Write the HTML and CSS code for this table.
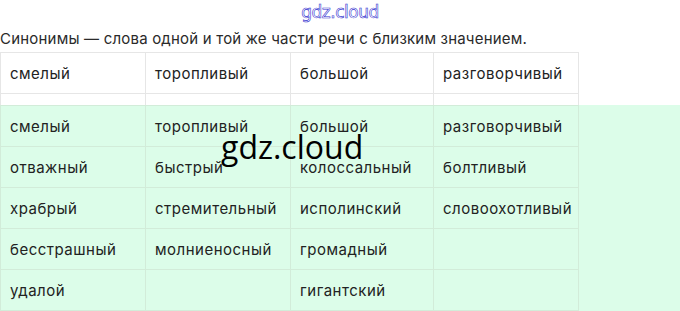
FILE: index.html
```html
<!DOCTYPE html>
<html lang="ru">
<head>
<meta charset="utf-8">
<link rel="stylesheet" href="styles.css">
</head>
<body>
<div class="logo">gdz.cloud</div>
<p class="intro">Синонимы — слова одной и той же части речи с близким значением.</p>
<table class="syn head">
  <colgroup><col class="c1"><col class="c2"><col class="c3"><col class="c4"></colgroup>
  <tr class="row"><td>смелый</td><td>торопливый</td><td>большой</td><td>разговорчивый</td></tr>
  <tr class="gap"><td></td><td></td><td></td><td></td></tr>
</table>
<div class="hl">
  <table class="syn body">
    <colgroup><col class="c1"><col class="c2"><col class="c3"><col class="c4"></colgroup>
    <tr class="row"><td>смелый</td><td>торопливый</td><td>большой</td><td>разговорчивый</td></tr>
    <tr class="row"><td>отважный</td><td>быстрый</td><td>колоссальный</td><td>болтливый</td></tr>
    <tr class="row"><td>храбрый</td><td>стремительный</td><td>исполинский</td><td>словоохотливый</td></tr>
    <tr class="row"><td>бесстрашный</td><td>молниеносный</td><td>громадный</td><td></td></tr>
    <tr class="row"><td>удалой</td><td></td><td>гигантский</td><td></td></tr>
  </table>
  <div class="mark">gdz.cloud</div>
</div>
</body>
</html>
```

FILE: styles.css
```css
html, body {
  margin: 0;
  padding: 0;
  background: #ffffff;
  overflow: hidden;
}
body {
  font-family: Inter, "Noto Sans", sans-serif;
  color: #1f1f1f;
  width: 680px;
  height: 311px;
}
.logo {
  height: 27px;
  text-align: center;
  font-family: "DejaVu Sans", sans-serif;
  font-size: 17px;
  line-height: 24px;
  color: #ffffff;
  -webkit-text-stroke: 0.6px #3434d0;
  letter-spacing: -0.5px;
}
.intro {
  margin: 0;
  font-size: 15px;
  line-height: 24px;
  height: 25px;
  color: #2a2a2a;
  letter-spacing: 0.2px;
}
.syn {
  border-collapse: collapse;
  table-layout: fixed;
  width: 578px;
  font-size: 15px;
  letter-spacing: 0.5px;
  color: #222;
}
.c1 { width: 145px; }
.c2 { width: 145px; }
.c3 { width: 143px; }
.c4 { width: 145px; }
.syn td {
  padding: 0 9px;
  white-space: nowrap;
  vertical-align: middle;
}
.head td {
  border: 1px solid #e6e6e6;
}
.head .row td {
  height: 40px;
}
.head .gap td {
  height: 11px;
  border-bottom: none;
}
.hl {
  position: relative;
  background: #dcfde9;
  height: 206px;
}
.body td {
  border: 1px solid #d2ecd9;
  height: 40px;
}
.mark {
  position: absolute;
  left: 221px;
  top: 22px;
  font-family: "Open Sans", sans-serif;
  font-size: 32px;
  line-height: 40px;
  color: #000;
}
```
